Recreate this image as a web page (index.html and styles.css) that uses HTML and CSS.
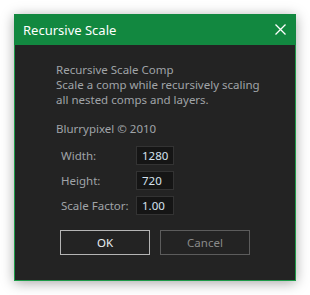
FILE: index.html
```html
<!DOCTYPE html>
<html lang="en">
<head>
  <meta charset="UTF-8" />
  <title>Recursive Scale</title>
  <link rel="stylesheet" href="styles.css">
</head>
<body>
  <div class="dialog">
    <div class="titlebar">
      <span class="title">Recursive Scale</span>
      <svg class="close" width="11" height="11" viewBox="0 0 11 11">
        <path d="M0.5 0.5 L10.5 10.5 M10.5 0.5 L0.5 10.5" stroke="#fff" stroke-width="1.3" fill="none" />
      </svg>
    </div>

    <div class="content">
      <p class="about">
        Recursive Scale Comp<br>
        Scale a comp while recursively scaling<br>
        all nested comps and layers.
      </p>
      <p class="about credit">Blurrypixel &copy; 2010</p>

      <div class="fields">
        <label>Width:</label>
        <div class="field">1280</div>
        <label>Height:</label>
        <div class="field">720</div>
        <label>Scale Factor:</label>
        <div class="field">1.00</div>
      </div>

      <div class="buttons">
        <button class="btn btn-ok">OK</button>
        <button class="btn btn-cancel">Cancel</button>
      </div>
    </div>
  </div>
</body>
</html>
```

FILE: styles.css
```css
/* Base */
body {
  margin: 0;
  background: #ffffff;
  font-family: "Noto Sans", "Open Sans", sans-serif;
}

/* Dialog window */
.dialog {
  width: 280px;
  height: 265px;
  margin: 14px;
  border: 1px solid #1d9a48;
  background: #232323;
  box-shadow: 0 2px 12px rgba(0, 0, 0, 0.35);
}

.titlebar {
  height: 31px;
  margin: -1px -1px 0 -1px;
  background: #128840;
  display: flex;
  align-items: center;
  justify-content: space-between;
  padding: 0 10px 0 9px;
}

.title {
  color: #ffffff;
  font-size: 13px;
}

/* Content */
.content {
  padding: 17px 0 0 41px;
}

.about {
  margin: 0 0 14px 0;
  font-size: 11.5px;
  line-height: 15px;
  color: #a0a4a8;
}

.about.credit {
  margin-bottom: 10px;
}

.fields {
  display: grid;
  grid-template-columns: 75px 38px;
  row-gap: 6px;
  align-items: center;
  margin: 1px 0 0 5px;
}

.fields label {
  font-size: 11.5px;
  color: #a0a4a8;
}

.field {
  height: 17px;
  line-height: 17px;
  padding-left: 5px;
  background: #151515;
  border: 1px solid #333333;
  color: #d6e2ee;
  font-size: 11.5px;
}

/* Buttons */
.buttons {
  display: flex;
  gap: 10px;
  margin: 15px 0 0 4px;
}

.btn {
  width: 90px;
  height: 25px;
  background: transparent;
  font-family: inherit;
  font-size: 11.5px;
}

.btn-ok {
  border: 1px solid #b4b4b4;
  color: #e8eef4;
}

.btn-cancel {
  border: 1px solid #5c5c5c;
  color: #8a8a8a;
}
```
